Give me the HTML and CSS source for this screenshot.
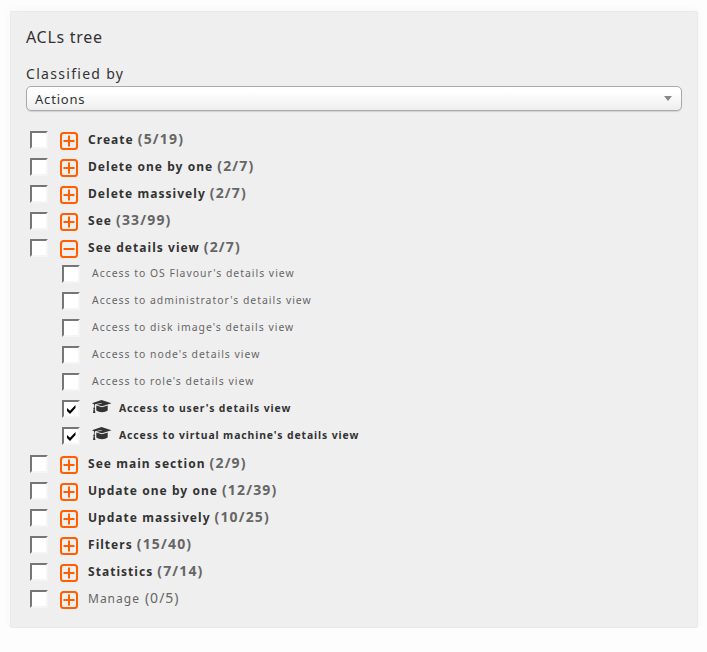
FILE: index.html
```
<!DOCTYPE html>
<html lang="en">
<head>
<meta charset="utf-8">
<title>ACLs tree</title>
<link rel="stylesheet" href="styles.css">
</head>
<body>
<svg class="defs" width="0" height="0" aria-hidden="true">
  <symbol id="plus" viewBox="0 0 18 18"><rect x="1" y="1" width="16" height="16" rx="2.5"/><path d="M3.5 9h11M9 3.5v11"/></symbol>
  <symbol id="minus" viewBox="0 0 18 18"><rect x="1" y="1" width="16" height="16" rx="2.5"/><path d="M3.5 9h11"/></symbol>
  <symbol id="cap" viewBox="0 0 20 14"><path d="M9.5 0 19.5 3.2 10 6.3 4.5 4.7 10 3.6 9.6 2.9 3 4.2Q2.5 5.5 2.6 7.3L3.2 8.5 2.7 9.3 3.4 13H1L1.6 9.3 1.2 8.4 1.9 7.3 2 4.2 0 3.2Z"/><path d="M4.3 5.5 10 7.2 15.7 5.5V10.5Q13.5 12.3 10 12.3T4.3 10.5Z"/></symbol>
  <symbol id="check" viewBox="0 0 14 14"><path d="M3 6 6 8.7 11.5 3V6L6 12 3 9Z"/></symbol>
</svg>
<main class="panel">
  <h1 class="title">ACLs tree</h1>
  <div class="label">Classified by</div>
  <div class="select"><span>Actions</span><i class="arrow"></i></div>
  <ul class="tree">
    <li class="row"><span class="box"></span><svg class="toggle"><use href="#plus"/></svg><b class="name">Create</b><b class="count">(5/19)</b></li>
    <li class="row"><span class="box"></span><svg class="toggle"><use href="#plus"/></svg><b class="name">Delete one by one</b><b class="count">(2/7)</b></li>
    <li class="row"><span class="box"></span><svg class="toggle"><use href="#plus"/></svg><b class="name">Delete massively</b><b class="count">(2/7)</b></li>
    <li class="row"><span class="box"></span><svg class="toggle"><use href="#plus"/></svg><b class="name">See</b><b class="count">(33/99)</b></li>
    <li class="row"><span class="box"></span><svg class="toggle"><use href="#minus"/></svg><b class="name">See details view</b><b class="count">(2/7)</b></li>
    <li>
      <ul class="children">
        <li class="row"><span class="box"></span><span class="leaf">Access to OS Flavour's details view</span></li>
        <li class="row"><span class="box"></span><span class="leaf">Access to administrator's details view</span></li>
        <li class="row"><span class="box"></span><span class="leaf">Access to disk image's details view</span></li>
        <li class="row"><span class="box"></span><span class="leaf">Access to node's details view</span></li>
        <li class="row"><span class="box"></span><span class="leaf">Access to role's details view</span></li>
        <li class="row"><span class="box"><svg class="check"><use href="#check"/></svg></span><svg class="cap"><use href="#cap"/></svg><b class="leaf on">Access to user's details view</b></li>
        <li class="row"><span class="box"><svg class="check"><use href="#check"/></svg></span><svg class="cap"><use href="#cap"/></svg><b class="leaf on">Access to virtual machine's details view</b></li>
      </ul>
    </li>
    <li class="row"><span class="box"></span><svg class="toggle"><use href="#plus"/></svg><b class="name">See main section</b><b class="count">(2/9)</b></li>
    <li class="row"><span class="box"></span><svg class="toggle"><use href="#plus"/></svg><b class="name">Update one by one</b><b class="count">(12/39)</b></li>
    <li class="row"><span class="box"></span><svg class="toggle"><use href="#plus"/></svg><b class="name">Update massively</b><b class="count">(10/25)</b></li>
    <li class="row"><span class="box"></span><svg class="toggle"><use href="#plus"/></svg><b class="name">Filters</b><b class="count">(15/40)</b></li>
    <li class="row"><span class="box"></span><svg class="toggle"><use href="#plus"/></svg><b class="name">Statistics</b><b class="count">(7/14)</b></li>
    <li class="row off"><span class="box"></span><svg class="toggle"><use href="#plus"/></svg><span class="name">Manage</span><span class="count">(0/5)</span></li>
  </ul>
</main>
</body>
</html>
```
FILE: styles.css
```
* { box-sizing: border-box; }
body {
  margin: 0;
  padding: 11px 9px 0 10px;
  background: #fdfdfd;
  color: #333;
  font-family: "Noto Sans", "Open Sans", sans-serif;
}
ul { list-style: none; margin: 0; padding: 0; }
.defs { position: absolute; }
.panel {
  height: 617px;
  padding: 13px 15px 0;
  background: #efefef;
  border: 1px solid #e9e9e9;
  border-radius: 2px;
  box-shadow: 0 0 10px rgba(0, 0, 0, .04);
}
.title { margin: 0; font-size: 16px; font-weight: 400; line-height: 24px; letter-spacing: .72px; }
.label { margin-top: 14px; font-size: 14px; line-height: 22px; letter-spacing: 1.3px; }
.select {
  display: flex;
  justify-content: space-between;
  align-items: center;
  height: 25px;
  margin-top: 1px;
  padding: 0 9px 0 8px;
  border: 1px solid #aaa;
  border-radius: 5px;
  background: linear-gradient(#fff 20%, #eee);
  box-shadow: 0 1px 1px rgba(0, 0, 0, .12);
  font-size: 13px;
  letter-spacing: .8px;
}
.arrow { border: solid transparent; border-width: 5px 4px 0; border-top-color: #888; }
.tree { padding: 16px 0 0 4px; }
.row { display: flex; align-items: flex-start; height: 27px; }
.box {
  flex: none;
  width: 18px;
  height: 18px;
  margin-top: 4px;
  border: 2px solid;
  border-color: #767676 #f5f5f5 #f5f5f5 #767676;
  background: #fff;
}
.check { display: block; width: 14px; height: 14px; fill: #000; }
.toggle {
  flex: none;
  width: 18px;
  height: 18px;
  margin: 5px 10px 0 12px;
  fill: none;
  stroke: #ff5f00;
  stroke-width: 2;
}
.name { font-size: 12px; line-height: 26px; letter-spacing: 1.04px; }
.count { margin-left: 4px; font-size: 14px; line-height: 24px; letter-spacing: 1.15px; color: #666; }
.off .name { color: #666; letter-spacing: 1px; }
.off .count { margin-left: 5px; letter-spacing: 1px; }
.children { margin: -1px 0 1px; padding-left: 32px; }
.leaf { margin-left: 12px; font-size: 10.4px; line-height: 24px; letter-spacing: 1.01px; color: #666; }
.cap { flex: none; width: 20px; height: 14px; margin: 4px 0 0 12px; fill: #333; }
.leaf.on { margin-left: 7px; letter-spacing: .9px; color: #333; }
```
